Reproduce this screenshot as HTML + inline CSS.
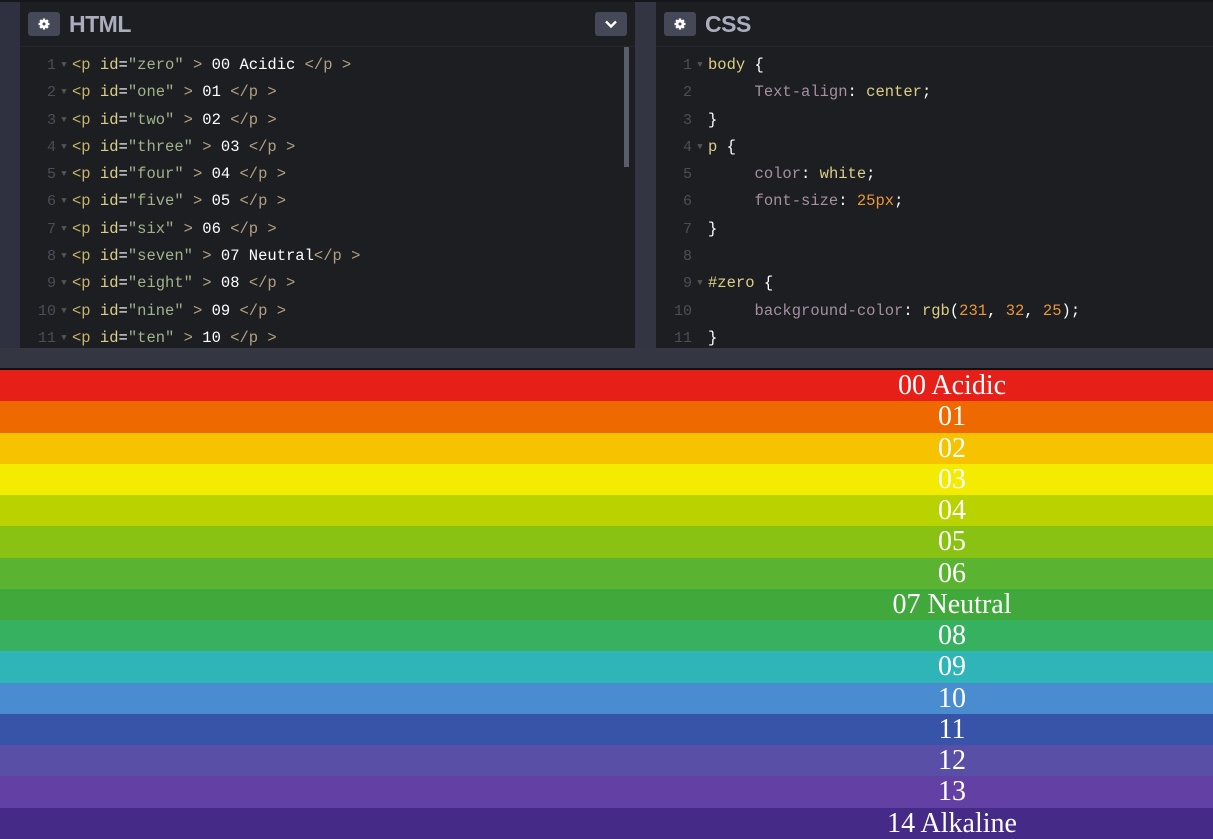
<!DOCTYPE html>
<html><head><meta charset="utf-8">
<style>
*{margin:0;padding:0;box-sizing:border-box}
body{width:1213px;height:839px;overflow:hidden;background:#1d1e22;position:relative;font-family:"Liberation Sans",sans-serif}
.abs{position:absolute}
.strip{background:#2f3140}
.hdr{top:2px;height:45px;background:#1d1e22;border-bottom:1px solid #26272d}
.btn{top:12px;width:32px;height:24px;background:#444857;border-radius:3px}
.title{top:11px;font-size:23px;font-weight:bold;color:#aaaebc;letter-spacing:-0.5px}
.code{font-family:"Liberation Mono",monospace;font-size:15.5px;line-height:26.3px;white-space:pre;color:#fff}
.ln{color:#4b4e58;display:inline-block;width:34px;text-align:right;font-size:15px}
.ar{color:#555;font-size:9px;display:inline-block;width:16px;text-align:center;vertical-align:2px}
.t{color:#c6b46a}.s{color:#9fb28a}.g{color:#b0a080}.pr{color:#a38fa1}.v{color:#dbce86}.n{color:#e8963a}
.stripes{top:370px;left:0;width:1213px;height:469px;display:flex;flex-direction:column}
.stripes div{flex:1;color:#fff;font-family:"Liberation Serif",serif;font-size:28px;line-height:31px;padding-left:691px;text-align:center}
</style></head><body>
<div class="abs" style="top:0;left:0;width:1213px;height:2px;background:#16171b"></div>
<div class="abs strip" style="top:2px;left:0;width:20px;height:346px"></div>
<div class="abs strip" style="top:2px;left:635px;width:21px;height:346px;background:#343542"></div>
<div class="abs hdr" style="left:20px;width:615px"></div>
<div class="abs hdr" style="left:656px;width:557px"></div>
<div class="abs btn" style="left:28px"><svg width="32" height="24" viewBox="0 0 32 24"><g fill="#fff"><circle cx="16" cy="12" r="4.2"/><g stroke="#fff" stroke-width="2.4"><line x1="16" y1="6.5" x2="16" y2="17.5"/><line x1="10.5" y1="12" x2="21.5" y2="12"/><line x1="12.1" y1="8.1" x2="19.9" y2="15.9"/><line x1="19.9" y1="8.1" x2="12.1" y2="15.9"/></g></g><circle cx="16" cy="12" r="1.5" fill="#444857"/></svg></div>
<div class="abs title" style="left:69px">HTML</div>
<div class="abs btn" style="left:595px"><svg width="32" height="24" viewBox="0 0 32 24"><path d="M11 9.5l5 5 5-5" fill="none" stroke="#fff" stroke-width="2.4"/></svg></div>
<div class="abs btn" style="left:664px"><svg width="32" height="24" viewBox="0 0 32 24"><g fill="#fff"><circle cx="16" cy="12" r="4.2"/><g stroke="#fff" stroke-width="2.4"><line x1="16" y1="6.5" x2="16" y2="17.5"/><line x1="10.5" y1="12" x2="21.5" y2="12"/><line x1="12.1" y1="8.1" x2="19.9" y2="15.9"/><line x1="19.9" y1="8.1" x2="12.1" y2="15.9"/></g></g><circle cx="16" cy="12" r="1.5" fill="#444857"/></svg></div>
<div class="abs title" style="left:705px">CSS</div>
<div class="abs" style="left:624px;top:47px;width:5px;height:120px;background:#5a5d6a"></div>

<div class="abs code" style="left:22px;top:52px;height:296px;overflow:hidden"><span class="ln">1</span><span class="ar">▼</span><span class="t">&lt;p</span> <span class="v">id</span>=<span class="s">"zero"</span> <span class="g">&gt;</span> 00 Acidic <span class="g">&lt;/p &gt;</span>
<span class="ln">2</span><span class="ar">▼</span><span class="t">&lt;p</span> <span class="v">id</span>=<span class="s">"one"</span> <span class="g">&gt;</span> 01 <span class="g">&lt;/p &gt;</span>
<span class="ln">3</span><span class="ar">▼</span><span class="t">&lt;p</span> <span class="v">id</span>=<span class="s">"two"</span> <span class="g">&gt;</span> 02 <span class="g">&lt;/p &gt;</span>
<span class="ln">4</span><span class="ar">▼</span><span class="t">&lt;p</span> <span class="v">id</span>=<span class="s">"three"</span> <span class="g">&gt;</span> 03 <span class="g">&lt;/p &gt;</span>
<span class="ln">5</span><span class="ar">▼</span><span class="t">&lt;p</span> <span class="v">id</span>=<span class="s">"four"</span> <span class="g">&gt;</span> 04 <span class="g">&lt;/p &gt;</span>
<span class="ln">6</span><span class="ar">▼</span><span class="t">&lt;p</span> <span class="v">id</span>=<span class="s">"five"</span> <span class="g">&gt;</span> 05 <span class="g">&lt;/p &gt;</span>
<span class="ln">7</span><span class="ar">▼</span><span class="t">&lt;p</span> <span class="v">id</span>=<span class="s">"six"</span> <span class="g">&gt;</span> 06 <span class="g">&lt;/p &gt;</span>
<span class="ln">8</span><span class="ar">▼</span><span class="t">&lt;p</span> <span class="v">id</span>=<span class="s">"seven"</span> <span class="g">&gt;</span> 07 Neutral<span class="g">&lt;/p &gt;</span>
<span class="ln">9</span><span class="ar">▼</span><span class="t">&lt;p</span> <span class="v">id</span>=<span class="s">"eight"</span> <span class="g">&gt;</span> 08 <span class="g">&lt;/p &gt;</span>
<span class="ln">10</span><span class="ar">▼</span><span class="t">&lt;p</span> <span class="v">id</span>=<span class="s">"nine"</span> <span class="g">&gt;</span> 09 <span class="g">&lt;/p &gt;</span>
<span class="ln">11</span><span class="ar">▼</span><span class="t">&lt;p</span> <span class="v">id</span>=<span class="s">"ten"</span> <span class="g">&gt;</span> 10 <span class="g">&lt;/p &gt;</span>
<span class="ln">12</span><span class="ar">▼</span><span class="t">&lt;p</span> <span class="v">id</span>=<span class="s">"eleven"</span> <span class="g">&gt;</span> 11 <span class="g">&lt;/p &gt;</span></div>

<div class="abs code" style="left:658px;top:52px;height:296px;overflow:hidden"><span class="ln">1</span><span class="ar">▼</span><span class="v">body</span> {
<span class="ln">2</span><span class="ar"> </span>     <span class="pr">Text-align</span>: <span class="v">center</span>;
<span class="ln">3</span><span class="ar"> </span>}
<span class="ln">4</span><span class="ar">▼</span><span class="v">p</span> {
<span class="ln">5</span><span class="ar"> </span>     <span class="pr">color</span>: <span class="v">white</span>;
<span class="ln">6</span><span class="ar"> </span>     <span class="pr">font-size</span>: <span class="n">25px</span>;
<span class="ln">7</span><span class="ar"> </span>}
<span class="ln">8</span>
<span class="ln">9</span><span class="ar">▼</span><span class="v">#zero</span> {
<span class="ln">10</span><span class="ar"> </span>     <span class="pr">background-color</span>: <span class="v">rgb</span>(<span class="n">231</span>, <span class="n">32</span>, <span class="n">25</span>);
<span class="ln">11</span><span class="ar"> </span>}
<span class="ln">12</span><span class="ar">▼</span><span class="v">#one</span> {</div>

<div class="abs" style="top:348px;left:0;width:1213px;height:20px;background:#343642"></div>
<div class="abs" style="top:368px;left:0;width:1213px;height:2px;background:#111"></div>
<div class="abs stripes">
<div style="background:#e61f19">00 Acidic</div>
<div style="background:#ee6a00">01</div>
<div style="background:#f7c300">02</div>
<div style="background:#f4ec00">03</div>
<div style="background:#b9d300">04</div>
<div style="background:#8ac213">05</div>
<div style="background:#5ab431">06</div>
<div style="background:#41a83b">07 Neutral</div>
<div style="background:#36b160">08</div>
<div style="background:#2fb5b8">09</div>
<div style="background:#4a8cd0">10</div>
<div style="background:#3854a8">11</div>
<div style="background:#594fa6">12</div>
<div style="background:#6340a3">13</div>
<div style="background:#452a87">14 Alkaline</div>
</div>
</body></html>
